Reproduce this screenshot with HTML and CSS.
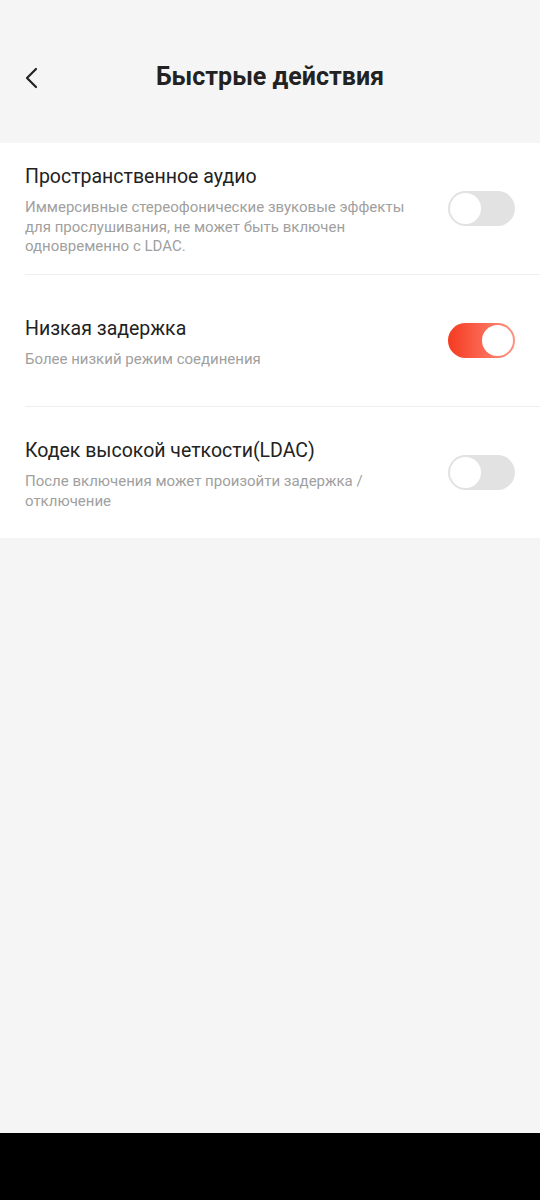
FILE: index.html
```html
<!DOCTYPE html>
<html lang="ru">
<head>
    <meta charset="UTF-8">
    <meta name="viewport" content="width=device-width, initial-scale=1.0">
    <title>Быстрые действия</title>
    <link rel="stylesheet" href="styles.css">
</head>
<body>
    <div class="screen">
        <header class="top-bar">
            <button class="back-btn" aria-label="Назад">
                <svg width="16" height="24" viewBox="0 0 16 24">
                    <path d="M12 3 L3 12 L12 21" fill="none" stroke="#222" stroke-width="2.2" stroke-linecap="round" stroke-linejoin="round"/>
                </svg>
            </button>
            <h1 class="page-title">Быстрые действия</h1>
        </header>

        <section class="settings-card">
            <div class="setting-row">
                <div class="setting-text">
                    <div class="setting-title">Пространственное аудио</div>
                    <div class="setting-desc">Иммерсивные стереофонические звуковые эффекты для прослушивания, не может быть включен одновременно с LDAC.</div>
                </div>
                <span class="switch"><span class="knob"></span></span>
            </div>
            <div class="divider"></div>
            <div class="setting-row">
                <div class="setting-text">
                    <div class="setting-title">Низкая задержка</div>
                    <div class="setting-desc">Более низкий режим соединения</div>
                </div>
                <span class="switch on"><span class="knob"></span></span>
            </div>
            <div class="divider"></div>
            <div class="setting-row">
                <div class="setting-text">
                    <div class="setting-title">Кодек высокой четкости(LDAC)</div>
                    <div class="setting-desc">После включения может произойти задержка / отключение</div>
                </div>
                <span class="switch"><span class="knob"></span></span>
            </div>
        </section>

        <div class="filler"></div>
        <div class="nav-bar"></div>
    </div>
</body>
</html>
```

FILE: styles.css
```css
body {
    margin: 0;
    padding: 0;
    background-color: #f5f5f5;
    font-family: Roboto, "Noto Sans", sans-serif;
    color: #222222;
}

.screen {
    display: flex;
    flex-direction: column;
    height: 1200px;
}

/* header */
.top-bar {
    height: 143px;
    display: flex;
    align-items: flex-start;
    padding-top: 53px;
    box-sizing: border-box;
    position: relative;
}

.back-btn {
    background: none;
    border: none;
    padding: 0;
    margin-left: 24px;
    margin-top: 13px;
    width: 16px;
    height: 24px;
    display: flex;
}

.page-title {
    position: absolute;
    left: 0;
    right: 0;
    top: 57px;
    margin: 0;
    text-align: center;
    font-size: 25px;
    font-weight: 700;
    line-height: 40px;
    color: #222222;
    pointer-events: none;
}

/* settings list */
.settings-card {
    background-color: #ffffff;
}

.setting-row {
    height: 131px;
    display: flex;
    align-items: center;
    padding: 0 25px;
    gap: 20px;
}

.setting-text {
    flex: 1;
    padding-top: 4px;
}

.setting-title {
    font-size: 19.5px;
    line-height: 26px;
    color: #222222;
}

.setting-desc {
    margin-top: 8px;
    font-size: 15px;
    line-height: 19.5px;
    color: #a0a0a0;
}

.divider {
    height: 1px;
    margin-left: 25px;
    background-color: #eeeeee;
}

/* toggle switch */
.switch {
    flex: none;
    width: 67px;
    height: 35px;
    border-radius: 18px;
    background-color: #e2e2e2;
    box-sizing: border-box;
    padding: 2px;
    display: flex;
    align-items: center;
}

.knob {
    width: 31px;
    height: 31px;
    border-radius: 50%;
    background-color: #ffffff;
}

.switch.on {
    background: linear-gradient(to right, #f53a20, #ff9182);
    justify-content: flex-end;
}

.filler {
    flex: 1;
}

.nav-bar {
    height: 67px;
    background-color: #000000;
}
```
